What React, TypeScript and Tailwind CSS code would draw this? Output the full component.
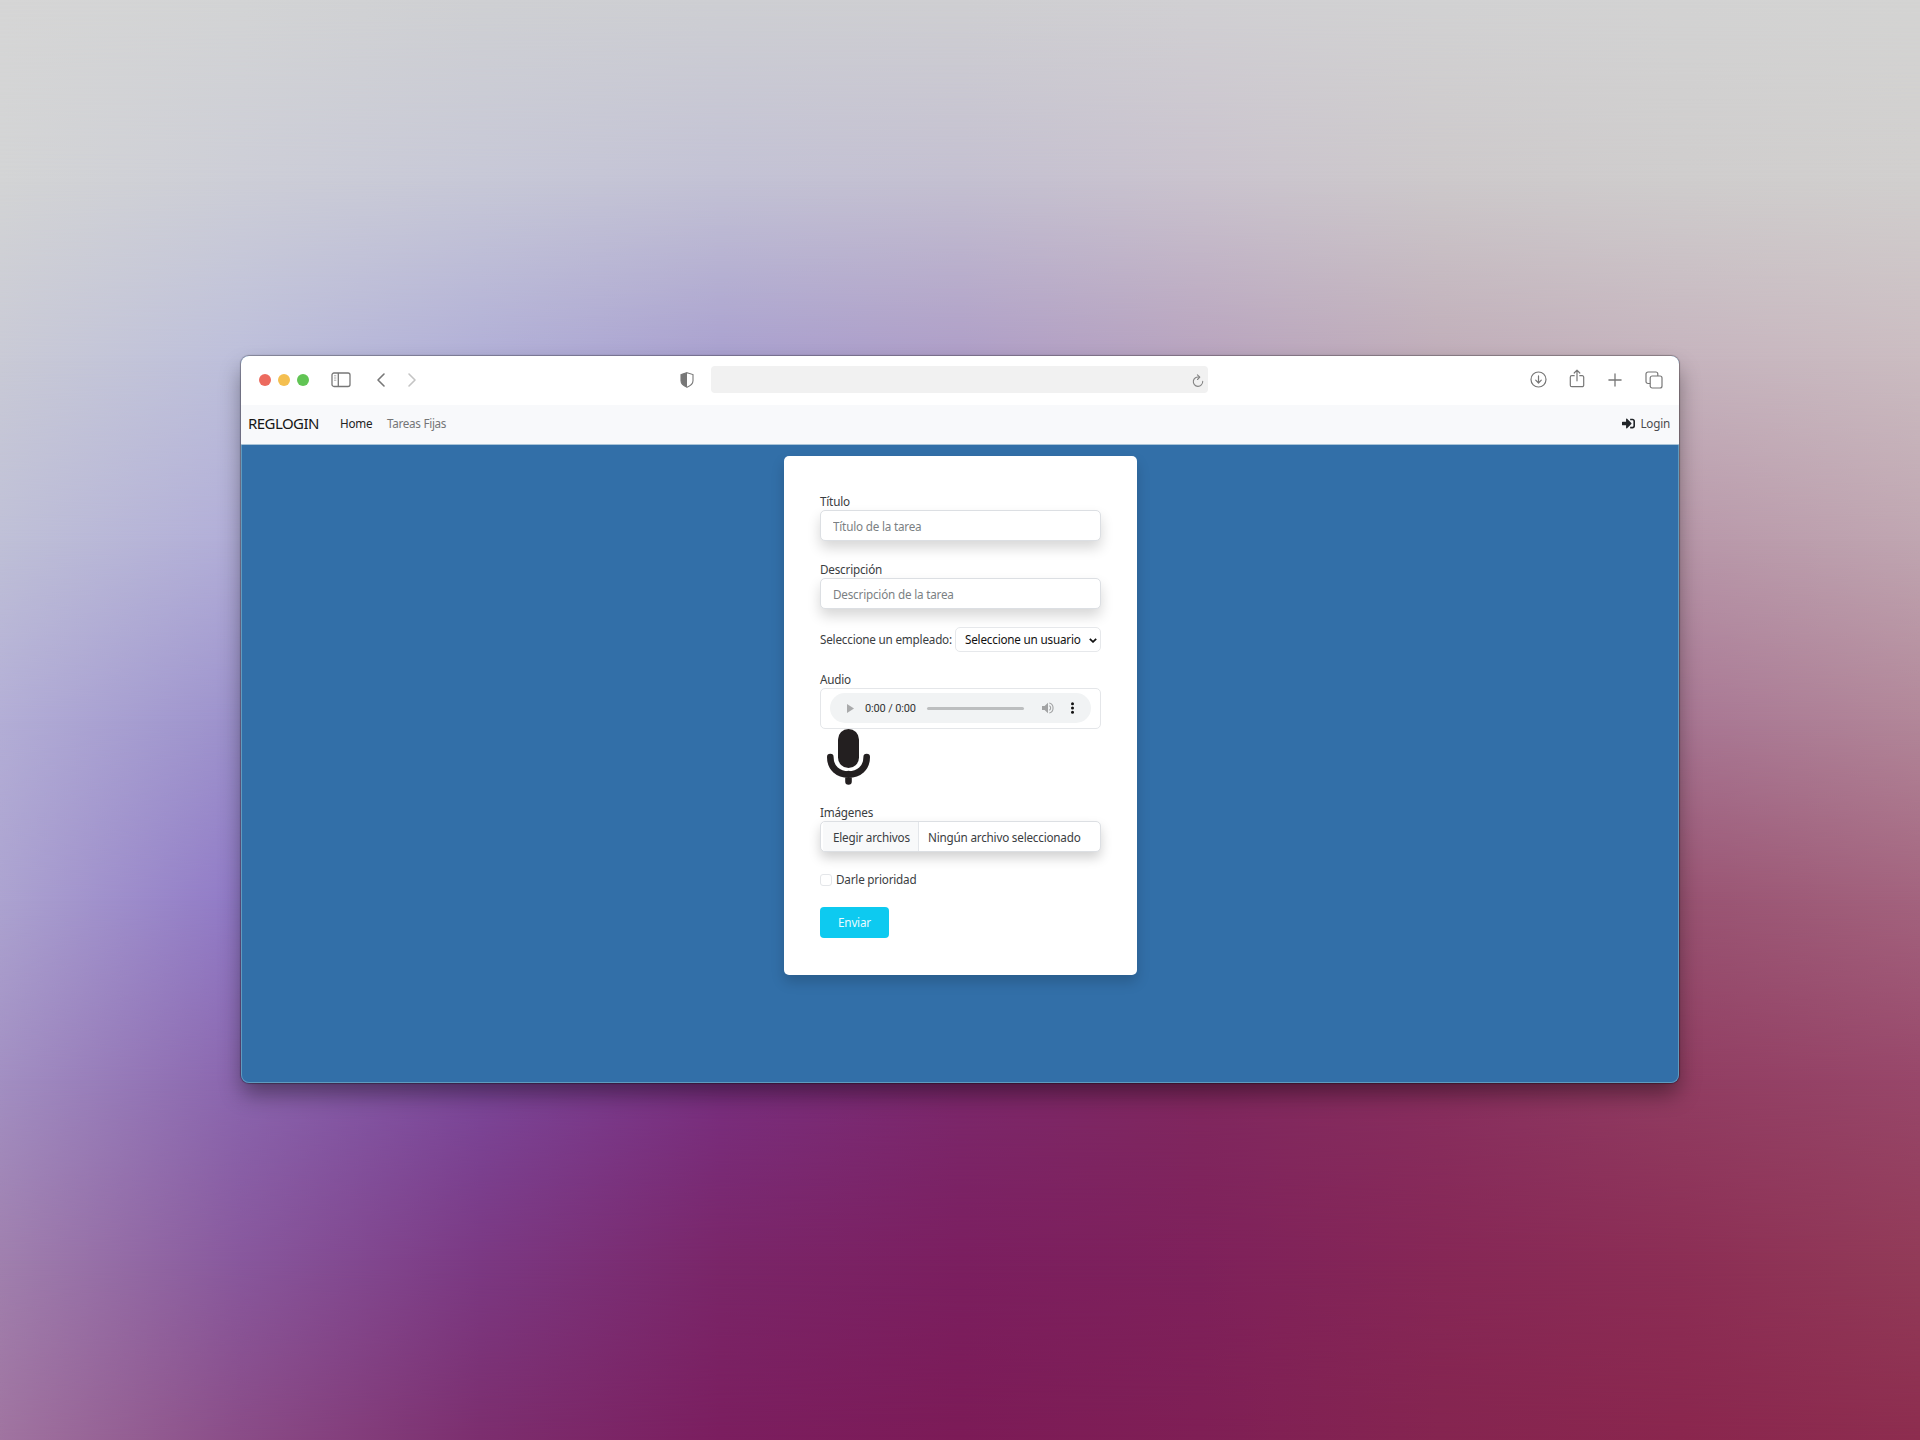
import React from "react";

/* Colour rows of the wallpaper mesh, evenly spaced from top to bottom. */
const MESH: string[][] = [
  ["#d6d6d6", "#d3d4d5", "#cfd0d3", "#cecfd3", "#cfcfd2", "#d1d0d3", "#d2d2d3", "#d3d3d3", "#d4d4d3"],
  ["#d3d4d5", "#cdced7", "#c7c8d7", "#c3c2d5", "#c4c0d1", "#cac3ce", "#cdc9cb", "#cfcdcd", "#d1cfce"],
  ["#c9cad6", "#bdbfdb", "#b1afd7", "#a9a0cf", "#ae9dc7", "#b8a3be", "#c0adb9", "#c6b4be", "#cbbcc1"],
  ["#bfc0d7", "#b1add8", "#a59dd2", "#a090c8", "#a68cb8", "#ae8eae", "#b394aa", "#b897a9", "#c0a6b1"],
  ["#b3aed6", "#9c91cc", "#8f7cc4", "#8b6cb4", "#9068a0", "#9a6a96", "#a26e90", "#a87693", "#b28799"],
  ["#aca3d0", "#9079c6", "#8260b0", "#7e4f9c", "#804584", "#8a4878", "#934b75", "#995372", "#a3637e"],
  ["#a28fc2", "#8a65ae", "#7b479a", "#792f80", "#7c286c", "#80285f", "#882f5f", "#913d62", "#98476a"],
  ["#a080ae", "#88589d", "#7b3983", "#7a2669", "#7b1f60", "#7e215b", "#862756", "#8c2e55", "#923b58"],
  ["#a074a0", "#8a4c87", "#7c2e6e", "#7b1e5f", "#7c1b57", "#7f1f55", "#852550", "#8a264e", "#8d2d4f"],
];

function Wallpaper() {
  const step = 100 / (MESH.length - 1);
  return (
    <div className="absolute inset-0 -z-10">
      {MESH.map((row, i) => {
        const mask = i === 0 ? undefined : `linear-gradient(to bottom, transparent ${(i - 1) * step}%, #000 ${i * step}%)`;
        return (
          <div
            key={i}
            className="absolute inset-0"
            style={{ backgroundImage: `linear-gradient(to right, ${row.join(", ")})`, maskImage: mask, WebkitMaskImage: mask }}
          />
        );
      })}
    </div>
  );
}

function Toolbar() {
  return (
    <div className="flex h-[49px] shrink-0 items-center bg-white pr-4 pl-[18px] pb-[2px] text-[#777]">
      <div className="flex gap-[7px]">
        <span className="size-3 rounded-full bg-[#ec6a5e]" />
        <span className="size-3 rounded-full bg-[#f4bf50]" />
        <span className="size-3 rounded-full bg-[#61c454]" />
      </div>
      <svg className="ml-[22px] h-4 w-5" viewBox="0 0 20 16" fill="none" stroke="currentColor" strokeWidth="1.3">
        <rect x="1" y="1" width="18" height="13.5" rx="2" />
        <path d="M7.3 1v13.5" />
        <path d="M3 3.8h2.3M3 6h2.3M3 8.2h2.3" strokeWidth="0.9" opacity="0.7" />
      </svg>
      <svg className="ml-[25px] h-4 w-[10px]" viewBox="0 0 10 16" fill="none" stroke="currentColor" strokeWidth="1.6" strokeLinecap="round" strokeLinejoin="round">
        <path d="M8 2 2 8l6 6" />
      </svg>
      <svg className="ml-[21px] h-4 w-[10px] text-[#c4c4c4]" viewBox="0 0 10 16" fill="none" stroke="currentColor" strokeWidth="1.6" strokeLinecap="round" strokeLinejoin="round">
        <path d="m2 2 6 6-6 6" />
      </svg>
      <svg className="ml-[263px] h-4 w-[14px]" viewBox="0 0 14 16">
        <path d="M7 .7 13 2.6v6.2c0 3-2.5 5-6 6.5-3.500-1.500-6-3.500-6-6.500V2.600Z" fill="none" stroke="currentColor" strokeWidth="1.1" />
        <path d="M7 .7v14.600c-3.500-1.500-6-3.500-6-6.500V2.600Z" fill="currentColor" />
      </svg>
      <div className="ml-[17px] flex h-[27px] w-[497px] items-center justify-end rounded-[4px] bg-[#f1f1f1] pr-1">
        <svg className="mt-[2px] h-[14px] w-3 text-[#858585]" viewBox="0 0 12 14" fill="none" stroke="currentColor" strokeWidth="1.1" strokeLinecap="round" strokeLinejoin="round">
          <path d="M7.200 3.100A4.700 4.700 0 1 0 10.700 7.400" />
          <path d="M5.400.8 7.800 3.200 5.500 5.500" />
        </svg>
      </div>
      <div className="ml-auto flex items-center">
        <svg className="size-[17px]" viewBox="0 0 17 17" fill="none" stroke="currentColor" strokeWidth="1.200" strokeLinecap="round" strokeLinejoin="round">
          <circle cx="8.500" cy="8.500" r="7.500" />
          <path d="M8.500 4.800v7M5.700 9.200l2.800 2.800 2.800-2.800" />
        </svg>
        <svg className="-mt-[2px] ml-[22px] h-[19px] w-4" viewBox="0 0 16 19" fill="none" stroke="currentColor" strokeWidth="1.200" strokeLinecap="round" strokeLinejoin="round">
          <path d="M5.200 6.700H2.800A1.500 1.500 0 0 0 1.300 8.200v8A1.500 1.500 0 0 0 2.800 17.700h10.400a1.500 1.500 0 0 0 1.500-1.500v-8a1.500 1.500 0 0 0-1.500-1.500h-2.400" />
          <path d="M8 11.800V1.300M5.200 4 8 1.200 10.800 4" />
        </svg>
        <svg className="ml-[23px] size-[14px]" viewBox="0 0 14 14" fill="none" stroke="currentColor" strokeWidth="1.300" strokeLinecap="round">
          <path d="M7 .9v12.200M.9 7h12.200" />
        </svg>
        <svg className="ml-[23px] size-[18px]" viewBox="0 0 18 18" fill="none" stroke="currentColor" strokeWidth="1.200">
          <path d="M5.200 12.500H3A2 2 0 0 1 1 10.500V3a2 2 0 0 1 2-2h7.800a2 2 0 0 1 2 2v2" />
          <rect x="5.200" y="5" width="11.800" height="12" rx="2" />
        </svg>
      </div>
    </div>
  );
}

function Navbar() {
  return (
    <nav className="flex h-[40px] shrink-0 items-center border-b border-[#a9c4d8] bg-[#f8f9fb] pr-[9px] pb-[2px] pl-[7px] text-[11.700px] tracking-[-0.200px] whitespace-nowrap">
      <span className="w-[71px] text-[15px] tracking-[-0.550px] text-[#161616]">REGLOGIN</span>
      <span className="ml-[21px] w-[33px] text-[#222]">Home</span>
      <span className="ml-[14px] tracking-[-0.300px] text-[#747577]">Tareas Fijas</span>
      <span className="ml-auto flex items-center gap-[5px] text-[#4a4b4d]">
        <svg className="size-[13px] text-[#212529]" viewBox="0 0 512 512" fill="currentColor">
          <path d="M416 448h-84c-6.600 0-12-5.400-12-12v-40c0-6.600 5.400-12 12-12h84c17.700 0 32-14.300 32-32V160c0-17.700-14.300-32-32-32h-84c-6.600 0-12-5.400-12-12V76c0-6.600 5.400-12 12-12h84c53 0 96 43 96 96v192c0 53-43 96-96 96zm-47-209L201 71c-15-15-41-4.500-41 17v96H24c-13.300 0-24 10.700-24 24v96c0 13.300 10.700 24 24 24h136v96c0 21.500 26 32 41 17l168-168c9.300-9.400 9.300-24.600 0-34z" />
        </svg>
        Login
      </span>
    </nav>
  );
}

function TextField({ label, placeholder }: { label: string; placeholder: string }) {
  return (
    <label className="flex flex-col">
      <span className="h-[19px] leading-[21px]">{label}</span>
      <input
        className="h-[31px] w-full rounded-[5px] border border-[#dcdfe3] bg-white px-3 shadow-[0_7px_13px_rgba(0,0,0,0.16)] placeholder:text-[#7b7f83]"
        placeholder={placeholder}
      />
    </label>
  );
}

function AudioPlayer() {
  return (
    <div className="flex h-[41px] w-[281px] items-center rounded-[5px] border border-[#e4e6e9] px-[9px] pb-px">
      <div className="flex h-[30px] w-full items-center rounded-full bg-[#f1f3f4] pr-[17px] pl-[17px]">
        <svg className="h-[9px] w-[7px]" viewBox="0 0 7 9" fill="#a9aaab">
          <path d="M0 0v9l7-4.500Z" />
        </svg>
        <span className="ml-[11px] w-[50px] pt-px font-['Roboto'] text-[11px] leading-none tracking-[-0.150px] whitespace-nowrap text-[#333]">0:00 / 0:00</span>
        <span className="ml-[12px] h-[3px] w-[97px] rounded-full bg-[#bcbebf]" />
        <svg className="ml-[18px] h-3 w-3" viewBox="0 0 12 12">
          <path d="M0 4v4h2.600L6 11.200V.8L2.600 4Z" fill="#a2a3a4" />
          <path d="M7.300 3.800c1.800.7 1.800 3.700 0 4.400M7.300 1c5 1.200 5 8.800 0 10" fill="none" stroke="#a2a3a4" strokeWidth="1.100" />
        </svg>
        <svg className="ml-auto h-3 w-[3px]" viewBox="0 0 3 12" fill="#111">
          <circle cx="1.500" cy="1.700" r="1.500" />
          <circle cx="1.500" cy="6" r="1.500" />
          <circle cx="1.500" cy="10.300" r="1.500" />
        </svg>
      </div>
    </div>
  );
}

function TaskForm() {
  return (
    <form className="mt-[11px] ml-px flex h-[519px] w-[353px] flex-col rounded-[5px] bg-white px-[36px] pt-[35px] text-[11.700px] tracking-[-0.200px] text-[#3a3d41] shadow-[0_7px_13px_rgba(0,0,0,0.17)]">
      <TextField label="Título" placeholder="Título de la tarea" />
      <div className="h-[18px]" />
      <TextField label="Descripción" placeholder="Descripción de la tarea" />
      <div className="mt-[18px] flex h-[25px] w-[281px] items-center justify-between whitespace-nowrap">
        <span className="pt-px">Seleccione un empleado:</span>
        <div className="flex h-[25px] w-[146px] items-center justify-between rounded-[5px] border border-[#e6e8eb] pt-px pr-[3px] pl-[9px] text-[#111]">
          <span>Seleccione un usuario</span>
          <svg className="h-[5px] w-2" viewBox="0 0 8 5" fill="none" stroke="#111" strokeWidth="1.700">
            <path d="m.8.800 3.200 3.100L7.200.800" />
          </svg>
        </div>
      </div>
      <span className="mt-[17px] h-[19px] leading-[20px]">Audio</span>
      <AudioPlayer />
      <svg className="ml-[7px] h-[56px] w-[43px] shrink-0" viewBox="0 0 43 56">
        <rect x="11" y="0" width="21" height="39" rx="10.500" fill="#231f20" />
        <path d="M3.300 28c0 11.300 8 17.500 18.200 17.500S39.700 39.300 39.700 28M21.500 45v7.500" fill="none" stroke="#231f20" strokeWidth="6.600" strokeLinecap="round" />
      </svg>
      <span className="mt-[17px] h-[19px] leading-[21px]">Imágenes</span>
      <div className="flex h-[31px] w-[281px] items-stretch rounded-[5px] border border-[#dcdfe3] bg-white leading-[30px] whitespace-nowrap shadow-[0_6px_12px_rgba(0,0,0,0.18)]">
        <span className="ml-[2px] w-[96px] border-r border-[#e3e6ea] bg-[#f8f9fa] pl-[10px]">Elegir archivos</span>
        <span className="ml-[9px]">Ningún archivo seleccionado</span>
      </div>
      <div className="mt-[18px] flex h-[19px] items-center gap-1">
        <span className="size-[12px] rounded-[3px] border border-[#e4e6e9]" />
        <span>Darle prioridad</span>
      </div>
      <button type="button" className="mt-[18px] h-[31px] w-[69px] rounded-[4px] bg-[#0dcaf0] pt-px text-[#e9fbff]">
        Enviar
      </button>
    </form>
  );
}

export default function App() {
  return (
    <div className="relative isolate flex h-[1440px] w-[1920px] items-start justify-center overflow-hidden pt-[356px] font-['Noto_Sans',sans-serif]">
      <Wallpaper />
      <div className="rounded-[8px] shadow-[0_0_1px_1px_rgba(0,0,0,0.3),0_12px_22px_-1px_rgba(0,0,0,0.4)]">
        <div className="flex h-[727px] w-[1438px] flex-col overflow-hidden rounded-[8px] bg-[#326fa8]">
          <Toolbar />
          <Navbar />
          <main className="flex grow items-start justify-center rounded-b-[8px] border-x border-b border-[#5f9bc0]">
            <TaskForm />
          </main>
        </div>
      </div>
    </div>
  );
}
